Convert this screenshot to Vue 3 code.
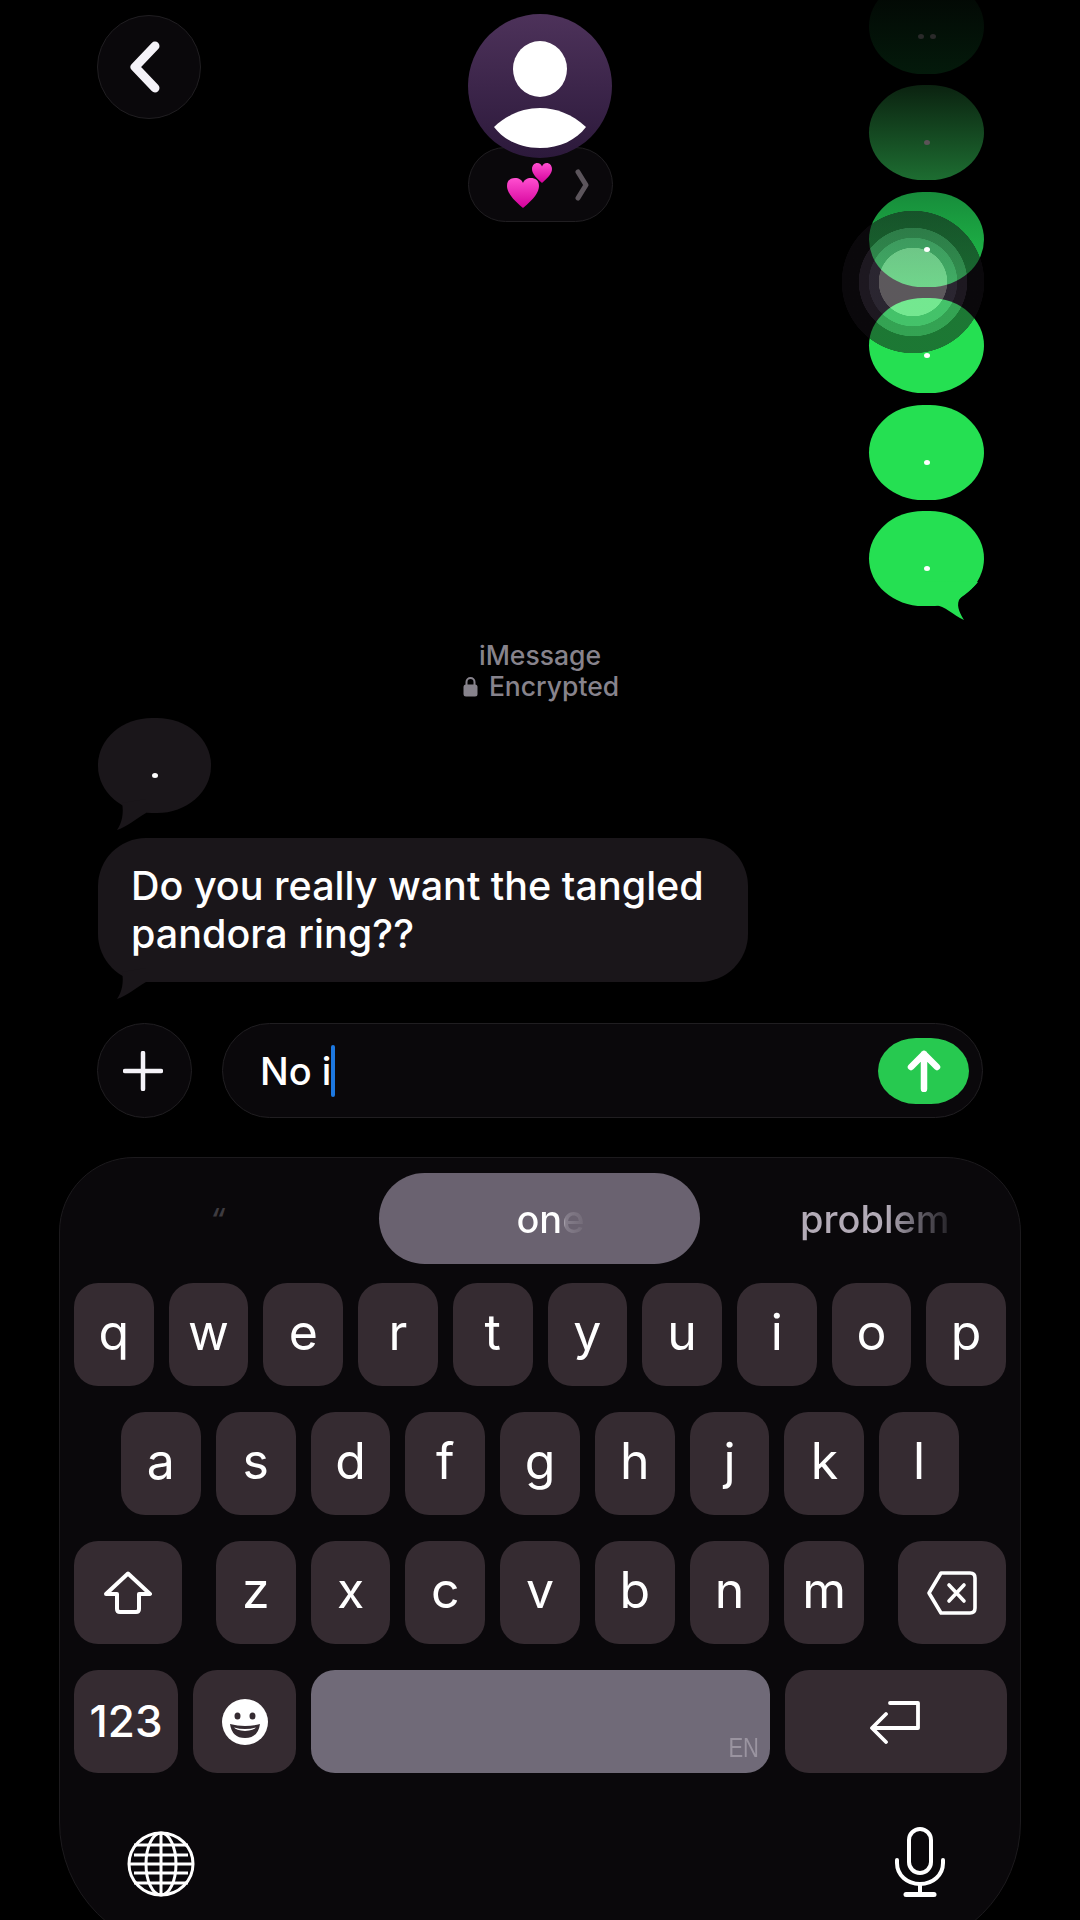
<script setup>
const sent = [1, 2, 3, 4, 5, 6]

const rows = [
  ['q', 'w', 'e', 'r', 't', 'y', 'u', 'i', 'o', 'p'],
  ['a', 's', 'd', 'f', 'g', 'h', 'j', 'k', 'l'],
]
const thirdRow = ['z', 'x', 'c', 'v', 'b', 'n', 'm']

const globeLats = [14, 24, 33, 42, 52]
</script>

<template>
  <div class="page">
    <section class="top">
      <button class="round back" aria-label="Back">
        <svg width="34" height="54" viewBox="0 0 34 54">
          <path d="M27 6 L7 27 L27 48" fill="none" stroke="#f4f2f8" stroke-width="9" stroke-linecap="round" stroke-linejoin="round" />
        </svg>
      </button>

      <div class="contact">
        <div class="avatar">
          <svg width="144" height="144" viewBox="0 0 144 144">
            <ellipse cx="72" cy="55" rx="27" ry="28" fill="#fff" />
            <path d="M26 113 C40 100 56 94 72 94 C88 94 104 100 118 113 C108 126 92 134 72 134 C52 134 36 126 26 113 Z" fill="#fff" />
          </svg>
        </div>
        <div class="name-pill">
          <svg class="hearts" width="45" height="45" viewBox="0 0 45 45">
            <defs>
              <linearGradient id="heartFill" x1="0" y1="0" x2="0" y2="1">
                <stop offset="0" stop-color="#ff4fd0" />
                <stop offset="1" stop-color="#d4009a" />
              </linearGradient>
            </defs>
            <path d="M35 20 C28 14 25 10 25 6 C25 2 28 0 30 0 C33 0 34 1.500 35 3.500 C36 1.500 37 0 40 0 C42 0 45 2 45 6 C45 10 42 14 35 20 Z" fill="url(#heartFill)" />
            <path d="M16 45 C5 36 0 29 0 23 C0 17 4 15 8 15 C12 15 15 17 16 20 C17 17 20 15 24 15 C28 15 32 17 32 23 C32 29 27 36 16 45 Z" fill="url(#heartFill)" />
          </svg>
          <svg class="chev" width="14" height="32" viewBox="0 0 14 32">
            <path d="M3 3 L11 16 L3 29" fill="none" stroke="#5c555c" stroke-width="5" stroke-linecap="round" stroke-linejoin="round" />
          </svg>
        </div>
      </div>

      <div class="sent-stack">
        <div v-for="n in sent" :key="n" class="sent">
          <span class="dot" />
          <span v-if="n === 1" class="dot" />
          <svg v-if="n === 6" class="sent-tail" width="60" height="40" viewBox="0 0 60 40">
            <path d="M0 24 H10 C20 25 28 34 39 39 C36 34 31 26 34 19 C38 13 48 8 53 1 L0 0 Z" fill="#25e052" />
          </svg>
        </div>
        <div class="ripple" />
      </div>
    </section>

    <div class="service">
      <span>iMessage</span>
      <span class="enc">
        <svg width="15" height="21" viewBox="0 0 15 21">
          <path d="M3.500 9 V6 a4 4 0 0 1 8 0 V9" fill="none" stroke="#87838c" stroke-width="2" />
          <rect x="0.500" y="8.500" width="14" height="12" rx="2.500" fill="#87838c" />
        </svg>
        Encrypted
      </span>
    </div>

    <div class="received tiny">
      <span class="dot" />
      <svg class="recv-tail" width="40" height="35" viewBox="0 0 40 35">
        <path d="M10 4 C12 14 10 24 5 31 C14 28 24 20 34 14 L34 0 Z" fill="#1a161a" />
      </svg>
    </div>
    <div class="received long">
      Do you really want the tangled<br />pandora ring??
      <svg class="recv-tail" width="40" height="35" viewBox="0 0 40 35">
        <path d="M10 4 C12 14 10 24 5 31 C14 28 24 20 34 14 L34 0 Z" fill="#1a161a" />
      </svg>
    </div>

    <div class="composer">
      <button class="round plus" aria-label="Add">
        <svg width="40" height="40" viewBox="0 0 40 40">
          <path d="M20 2 V38 M2 20 H38" stroke="#f4f2f8" stroke-width="4.500" stroke-linecap="round" />
        </svg>
      </button>
      <div class="field">
        <span class="typed">No i</span><span class="caret" />
        <button class="send" aria-label="Send">
          <svg width="38" height="42" viewBox="0 0 38 42">
            <path d="M19 39 V4 M6 17 L19 4 L32 17" fill="none" stroke="#fff" stroke-width="6.500" stroke-linecap="round" stroke-linejoin="round" />
          </svg>
        </button>
      </div>
    </div>

    <div class="keyboard">
      <div class="suggest">
        <span class="sug-cell quote">“</span>
        <span class="sug-mid"><span class="fade-one">one</span></span>
        <span class="sug-cell right"><span class="fade-problem">problem</span></span>
      </div>

      <div v-for="(row, i) in rows" :key="i" class="row" :class="{ inset: i === 1 }">
        <div v-for="k in row" :key="k" class="key">{{ k }}</div>
      </div>

      <div class="row">
        <div class="key wide">
          <svg width="50" height="44" viewBox="0 0 50 44">
            <path d="M25 2.500 L47 23 H36 V38 Q36 41 33 41 H17 Q14 41 14 38 V23 H3 Z" fill="none" stroke="#fff" stroke-width="4" stroke-linejoin="round" />
          </svg>
        </div>
        <div class="letters">
          <div v-for="k in thirdRow" :key="k" class="key">{{ k }}</div>
        </div>
        <div class="key wide">
          <svg width="52" height="46" viewBox="0 0 52 46">
            <path d="M15 3 H44 Q49 3 49 8 V38 Q49 43 44 43 H15 L3 23 Z" fill="none" stroke="#fff" stroke-width="3.600" stroke-linejoin="round" />
            <path d="M23 15 L38 31 M38 15 L23 31" stroke="#fff" stroke-width="3.600" stroke-linecap="round" />
          </svg>
        </div>
      </div>

      <div class="row">
        <div class="key num">123</div>
        <div class="key emoji">
          <svg width="46" height="46" viewBox="0 0 46 46">
            <circle cx="23" cy="23" r="23" fill="#fff" />
            <ellipse cx="15.500" cy="17" rx="3" ry="3.600" fill="#352b31" />
            <ellipse cx="30.500" cy="17" rx="3" ry="3.600" fill="#352b31" />
            <path d="M8 25 Q23 29 38 25 Q36 39 23 39 Q10 39 8 25 Z" fill="#352b31" />
            <path d="M12 28.500 Q23 31.500 34 28.500 Q32 31 23 32 Q14 31 12 28.500 Z" fill="#fff" />
          </svg>
        </div>
        <div class="key space"><span class="lang">EN</span></div>
        <div class="key enter">
          <svg width="54" height="44" viewBox="0 0 54 44">
            <path d="M21 3 H49 V28 H4 M17 14 L3 28 L17 42" fill="none" stroke="#fff" stroke-width="3.800" stroke-linecap="round" stroke-linejoin="round" />
          </svg>
        </div>
      </div>

      <div class="kb-foot">
        <svg width="68" height="66" viewBox="0 0 68 66">
          <g fill="none" stroke="#fff" stroke-width="3">
            <ellipse cx="34" cy="33" rx="32" ry="31" />
            <ellipse cx="34" cy="33" rx="15" ry="31" />
            <path d="M34 2 V64" />
            <path v-for="y in globeLats" :key="y" :d="`M${y === 33 ? 2 : 7} ${y} H${y === 33 ? 66 : 61}`" />
          </g>
        </svg>
        <svg width="52" height="70" viewBox="0 0 52 70">
          <g fill="none" stroke="#fff" stroke-width="4" stroke-linecap="round">
            <rect x="15" y="2" width="22" height="44" rx="11" />
            <path d="M3 33 V36 C3 48 13 57 26 57 C39 57 49 48 49 36 V33" />
            <path d="M26 57 V67" />
            <path d="M12 67.500 H40" stroke-width="5" />
          </g>
        </svg>
      </div>
    </div>
  </div>
</template>

<style scoped>
.page {
  width: 1080px;
  height: 1920px;
  overflow: hidden;
  background: #000;
  color: #fff;
  font-family: Inter, "Liberation Sans", sans-serif;
}

button {
  padding: 0;
  border: 0;
  background: none;
  display: flex;
  align-items: center;
  justify-content: center;
}

.top {
  height: 640px;
  padding: 0 96px 0 97px;
  display: grid;
  grid-template-columns: 1fr auto 1fr;
  align-items: start;
}

.round {
  border-radius: 50%;
  border: 1.500px solid #201e21;
  background: #0a080b;
  box-sizing: border-box;
}

.back {
  width: 104px;
  height: 104px;
  margin-top: 15px;
  padding-right: 8px;
}

.contact {
  margin-top: 14px;
  width: 145px;
}

.avatar {
  position: relative;
  z-index: 1;
  width: 144px;
  height: 144px;
  border-radius: 50%;
  background: linear-gradient(#4d325a, #2c193b);
}

.name-pill {
  margin-top: -11px;
  height: 75px;
  box-sizing: border-box;
  border: 1.500px solid #201e21;
  border-radius: 38px;
  background: #0a080b;
  display: flex;
  align-items: center;
  gap: 23px;
  padding-left: 38px;
}

.hearts {
  position: relative;
  z-index: 2;
  margin-top: 2px;
}

.sent-stack {
  position: relative;
  justify-self: end;
  width: 115px;
  margin-top: -21.500px;
  display: flex;
  flex-direction: column;
  gap: 11.500px;
}

.sent {
  position: relative;
  height: 95px;
  border-radius: 54px / 47.500px;
  display: flex;
  justify-content: center;
  gap: 6px;
  background: #25e052;
}

.sent:nth-child(1) { background: linear-gradient(#020503, #041a0b); }
.sent:nth-child(2) { background: linear-gradient(#0b2210, #1d6d31); }
.sent:nth-child(3) { background: linear-gradient(#178c3b, #20c34a); }

.dot {
  position: relative;
  z-index: 2;
  width: 6px;
  height: 5px;
  margin-top: 55px;
  border-radius: 50%;
  background: #fff;
}

.sent:nth-child(1) .dot { background: #2a2a2a; }
.sent:nth-child(2) .dot { background: #5b5357; }

.sent-tail {
  position: absolute;
  right: -1px;
  bottom: -15px;
}

/* touch indicator sits over the bubbles */
.ripple {
  position: absolute;
  z-index: 1;
  left: -31px;
  top: 228.500px;
  width: 150px;
  height: 150px;
  border-radius: 50%;
  background: radial-gradient(
    circle closest-side,
    rgba(255, 245, 255, 0.36) 0 34px,
    rgba(140, 125, 160, 0.3) 34.500px 44px,
    rgba(76, 63, 84, 0.38) 44.500px 54px,
    rgba(20, 16, 22, 0.5) 54.500px 71px,
    transparent 71.500px
  );
}

.service {
  display: flex;
  flex-direction: column;
  align-items: center;
  font-size: 26.500px;
  font-weight: 500;
  line-height: 31px;
  color: #87838c;
}

.enc {
  display: flex;
  align-items: center;
  gap: 11px;
  margin-left: 2px;
}

.received {
  position: relative;
  margin-left: 98px;
  background: #1a161a;
}

.tiny {
  width: 113px;
  height: 95px;
  margin-top: 16px;
  border-radius: 54px / 47px;
  display: flex;
  justify-content: center;
}

.long {
  width: 650px;
  height: 144px;
  margin-top: 25px;
  box-sizing: border-box;
  padding: 24px 0 0 33px;
  border-radius: 48px;
  font-size: 39.500px;
  font-weight: 500;
  line-height: 48px;
}

.recv-tail {
  position: absolute;
  left: 14px;
  bottom: -21px;
}

.composer {
  display: flex;
  gap: 30px;
  margin: 41px 97px 0;
}

.plus {
  flex: none;
  width: 95px;
  height: 95px;
  padding-right: 4px;
}

.field {
  flex: 1;
  height: 95px;
  box-sizing: border-box;
  border: 1.500px solid #201e21;
  border-radius: 48px;
  background: #0a080b;
  display: flex;
  align-items: center;
  padding: 0 13px 0 37px;
}

.typed {
  font-size: 38px;
  font-weight: 500;
}

.caret {
  width: 4px;
  height: 52px;
  border-radius: 2px;
  background: #1d78e0;
}

.send {
  margin-left: auto;
  width: 91px;
  height: 66px;
  border-radius: 38px / 33px;
  background: #27c950;
}

.keyboard {
  height: 795px;
  box-sizing: border-box;
  margin: 39px 59px 0;
  padding: 15px 14px 0;
  border: 1.500px solid #1c1a1d;
  border-radius: 75px 75px 130px 130px;
  background: #0a080b;
  display: flex;
  flex-direction: column;
  gap: 26px;
}

.suggest {
  display: flex;
  height: 91px;
  margin-bottom: -7px;
  align-items: center;
  font-size: 38px;
  font-weight: 500;
}

.sug-cell {
  flex: none;
  width: 305px;
  box-sizing: border-box;
  display: flex;
  justify-content: center;
}

.quote {
  padding-right: 18px;
  color: #3e3b40;
  font-size: 30px;
  font-style: italic;
}

.right {
  justify-content: flex-start;
  padding-left: 100px;
}

.sug-mid {
  flex: none;
  width: 321px;
  height: 91px;
  box-sizing: border-box;
  padding-left: 22px;
  border-radius: 46px;
  background: #6a6270;
  display: flex;
  align-items: center;
  justify-content: center;
}

.fade-one,
.fade-problem {
  -webkit-background-clip: text;
  background-clip: text;
  color: transparent;
}

.fade-one {
  background-image: linear-gradient(90deg, #fff 66%, #857e8b 72%, #726a77 100%);
}

.fade-problem {
  background-image: linear-gradient(90deg, #b3abb7 58%, #6f6a74 76%, #242227 100%);
}

.row {
  display: flex;
  gap: 15px;
  height: 103px;
}

.row.inset {
  padding: 0 47px;
}

.key {
  flex: 1;
  min-width: 0;
  height: 103px;
  box-sizing: border-box;
  padding-bottom: 6px;
  border-radius: 24px;
  background: #352b31;
  display: flex;
  align-items: center;
  justify-content: center;
  font-size: 50px;
}

.wide {
  flex: none;
  width: 108px;
  padding-bottom: 0;
}

.letters {
  flex: 1;
  display: flex;
  gap: 15px;
  margin: 0 19px;
}

.num {
  flex: none;
  width: 104px;
  font-size: 44px;
  font-weight: 500;
  padding-bottom: 2px;
}

.emoji {
  flex: none;
  width: 103px;
  padding-bottom: 0;
}

.space {
  flex: none;
  width: 459px;
  background: #706a78;
  align-items: flex-end;
  justify-content: flex-end;
  padding: 0 11px 12px 0;
}

.lang {
  display: inline-block;
  font-size: 22px;
  line-height: 26px;
  color: #9a94a0;
  font-family: "Liberation Sans", sans-serif;
  transform: scaleY(1.25);
}

.enter {
  flex: none;
  width: 222px;
  padding-bottom: 0;
}

.kb-foot {
  display: flex;
  justify-content: space-between;
  align-items: flex-end;
  margin-top: 28px;
  padding: 0 60px 0 53px;
}
</style>

<style>
html,
body {
  margin: 0;
  background: #000;
}
</style>
